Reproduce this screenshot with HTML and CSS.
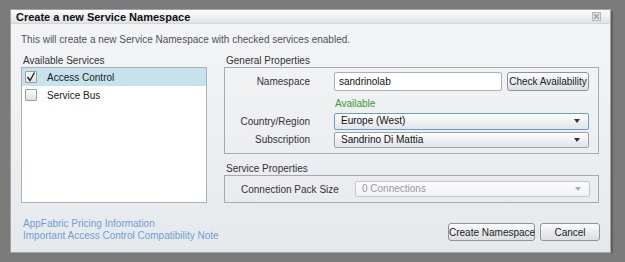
FILE: index.html
```html
<!DOCTYPE html>
<html lang="en">
	<head>
	<meta charset="UTF-8" />
	<title>Create a new Service Namespace</title>
	<link rel="stylesheet" href="styles.css">
	</head>
	<body>
		<div class="dialog">
			<div class="titlebar">
				<span class="title">Create a new Service Namespace</span>
				<svg class="close" width="9" height="9" viewBox="0 0 9 9">
					<rect x="0.5" y="0.5" width="8" height="8" fill="#e4e6e8" stroke="#b3b7ba" />
					<path d="M2 2 L7 7 M7 2 L2 7" stroke="#9a9ea2" stroke-width="1.2" />
				</svg>
			</div>
			<p class="intro">This will create a new Service Namespace with checked services enabled.</p>
			<div class="columns">
				<div class="services">
					<div class="caption">Available Services</div>
					<ul class="list">
						<li class="selected"><span class="check checked"><svg width="10" height="10" viewBox="0 0 10 10"><path d="M1.5 5 L4 8.5 L8.5 0.5" fill="none" stroke="#222" stroke-width="1.4" /></svg></span>Access Control</li>
						<li><span class="check"></span>Service Bus</li>
					</ul>
				</div>
				<div class="props">
					<div class="caption">General Properties</div>
					<div class="group general">
						<label>Namespace</label>
						<div class="pair">
							<span class="input">sandrinolab</span>
							<button class="btn check-btn">Check Availability</button>
						</div>
						<span></span>
						<span class="ok">Available</span>
						<label>Country/Region</label>
						<span class="select focus">Europe (West)<i class="arrow"></i></span>
						<label>Subscription</label>
						<span class="select">Sandrino Di Mattia<i class="arrow"></i></span>
					</div>
					<div class="caption second">Service Properties</div>
					<div class="group service">
						<label>Connection Pack Size</label>
						<span class="select disabled">0 Connections<i class="arrow"></i></span>
					</div>
				</div>
			</div>
			<div class="footer">
				<div class="links">
					<a href="#">AppFabric Pricing Information</a>
					<a href="#">Important Access Control Compatibility Note</a>
				</div>
				<div class="actions">
					<button class="btn create">Create Namespace</button>
					<button class="btn cancel">Cancel</button>
				</div>
			</div>
		</div>
	</body>
</html>
```
FILE: styles.css
```css
* { box-sizing: border-box; }
html { font-family: "Liberation Sans", Arial, sans-serif; font-size: 10px; }
body { margin: 0; padding: 9px 0 0 10px; background-color: #7a7a7a; color: #333; }
.dialog { width: 601px; height: 244px; border: 1px solid #9ea3a8; background: linear-gradient(#f4f5f7, #e6e9ec); box-shadow: 2px 2px 0 #5f5f5f; }
.titlebar { height: 14px; display: flex; align-items: center; justify-content: space-between; padding: 0 9px 0 5px; background: linear-gradient(#fbfcfc, #dfe3e6); border-bottom: 1px solid #d3d7da; }
.title { font-weight: bold; font-size: 11px; color: #111; }
.close { display: block; }
.intro { margin: 10px 0 0 10px; line-height: 12px; color: #4d5157; }
.columns { display: flex; gap: 17px; margin: 9px 10px 0 10px; }
.caption { line-height: 12px; padding-left: 2px; color: #333; white-space: nowrap; }
.services { width: 186px; }
.list { list-style: none; margin: 0; padding: 0; height: 136px; background: #fff; border: 1px solid #a9b0b5; }
.list li { height: 18px; display: flex; align-items: center; padding-left: 3px; gap: 10px; color: #222; }
.list li.selected { background: #c6e2eb; }
.check { width: 12px; height: 12px; border: 1px solid #98a0a6; border-radius: 1px; background: linear-gradient(#fafbfb, #dde2e5); display: flex; align-items: center; justify-content: center; }
.props { width: 375px; }
.group { border: 1px solid #a4abb0; }
.general { height: 87px; display: grid; grid-template-columns: 85px 1fr; column-gap: 24px; padding: 4px 9px 0 0; align-items: center; grid-template-rows: 19px 22px 16px 21px; }
.general label, .service label { text-align: right; color: #333; white-space: nowrap; }
.general .ok { color: #3a9a2a; align-self: end; padding: 0 0 4px 1px; }
.pair { display: flex; gap: 5px; }
.input { width: 168px; height: 19px; border: 1px solid #a9b0b5; border-radius: 2px; background: #fff; padding: 0 4px; line-height: 17px; color: #111; }
.btn { font: inherit; color: #222; border: 1px solid #8d959a; border-radius: 3px; background: linear-gradient(#fdfdfd, #e9ebed 50%, #dcdfe2); padding: 0; white-space: nowrap; }
.check-btn { width: 82px; height: 19px; }
.select { position: relative; display: block; height: 16px; line-height: 14px; border: 1px solid #9aa2a8; border-radius: 2px; background: linear-gradient(#ffffff, #eef0f2 50%, #e2e5e8); padding: 0 6px; color: #111; white-space: nowrap; }
.select.focus { border-color: #62a4c6; height: 17px; margin-top: 1px; }
.select.disabled { color: #9a9a9a; border-color: #c3c8cb; background: linear-gradient(#fbfbfc, #f1f2f4); }
.arrow { position: absolute; right: 8px; top: 5px; border-left: 3px solid transparent; border-right: 3px solid transparent; border-top: 4px solid #333; }
.select.disabled .arrow { border-top-color: #a8adb1; }
.caption.second { margin-top: 9px; }
.service { height: 28px; display: grid; grid-template-columns: 111px 1fr; column-gap: 19px; align-items: center; padding: 0 8px 0 0; }
.service label { text-align: left; padding-left: 16px; }
.footer { display: flex; justify-content: space-between; margin: 15px 10px 0 12px; }
.links { display: flex; flex-direction: column; }
.links a { color: #6e9fd4; text-decoration: none; line-height: 12px; }
.actions { display: flex; gap: 5px; padding-top: 5px; }
.create { width: 87px; height: 18px; }
.cancel { width: 60px; height: 18px; }
```
